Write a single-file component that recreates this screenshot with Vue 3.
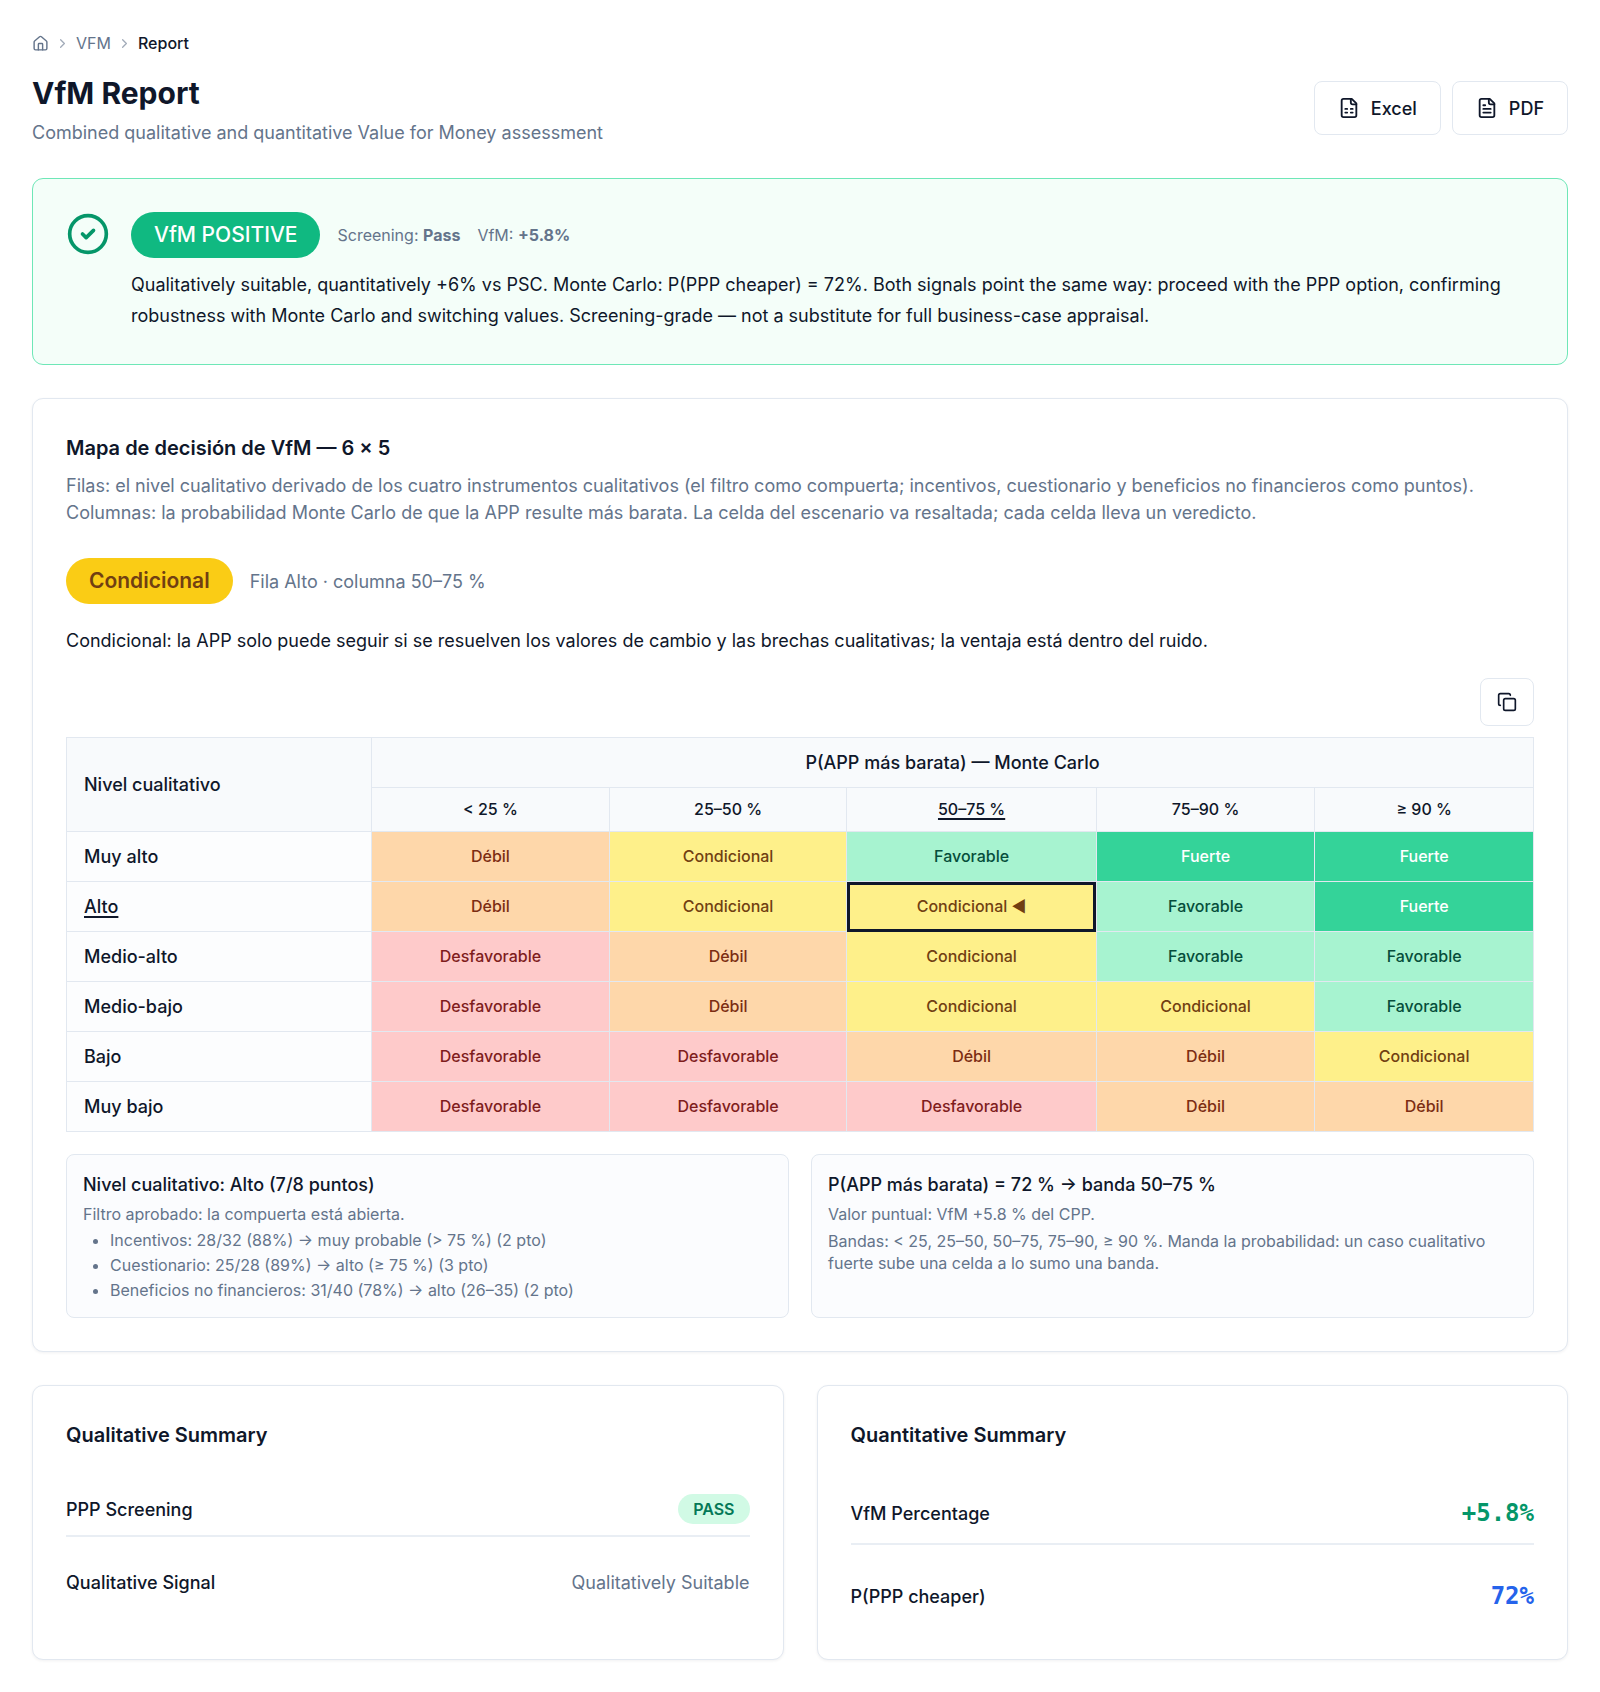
<script setup>
const bands = ['< 25 %', '25–50 %', '50–75 %', '75–90 %', '≥ 90 %']
const activeBand = 2
const activeLevel = 1

const D = 'Débil'
const C = 'Condicional'
const F = 'Favorable'
const S = 'Fuerte'
const X = 'Desfavorable'

const levels = [
  { name: 'Muy alto', cells: [D, C, F, S, S] },
  { name: 'Alto', cells: [D, C, C, F, S] },
  { name: 'Medio-alto', cells: [X, D, C, F, F] },
  { name: 'Medio-bajo', cells: [X, D, C, C, F] },
  { name: 'Bajo', cells: [X, X, D, D, C] },
  { name: 'Muy bajo', cells: [X, X, X, D, D] },
]

const tone = { [D]: 'weak', [C]: 'conditional', [F]: 'favorable', [S]: 'strong', [X]: 'unfavorable' }

const isScenario = (l, b) => l === activeLevel && b === activeBand

const points = [
  'Incentivos: 28/32 (88%) → muy probable (> 75 %) (2 pto)',
  'Cuestionario: 25/28 (89%) → alto (≥ 75 %) (3 pto)',
  'Beneficios no financieros: 31/40 (78%) → alto (26–35) (2 pto)',
]
</script>

<template>
  <main class="page">
    <nav class="crumbs" aria-label="Breadcrumb">
      <a href="#" aria-label="Home">
        <svg class="icon home" viewBox="0 0 24 24">
          <path d="M15 21v-8a1 1 0 0 0-1-1h-4a1 1 0 0 0-1 1v8" />
          <path d="M3 10a2 2 0 0 1 .709-1.528l7-5.999a2 2 0 0 1 2.582 0l7 5.999A2 2 0 0 1 21 10v9a2 2 0 0 1-2 2H5a2 2 0 0 1-2-2z" />
        </svg>
      </a>
      <svg class="icon chevron" viewBox="0 0 24 24"><path d="m9 18 6-6-6-6" /></svg>
      <a href="#">VFM</a>
      <svg class="icon chevron" viewBox="0 0 24 24"><path d="m9 18 6-6-6-6" /></svg>
      <span class="current">Report</span>
    </nav>

    <header class="head">
      <div>
        <h1>VfM Report</h1>
        <p class="subtitle">Combined qualitative and quantitative Value for Money assessment</p>
      </div>
      <div class="actions">
        <button type="button" class="btn">
          <svg class="icon file" viewBox="0 0 24 24">
            <path d="M15 2H6a2 2 0 0 0-2 2v16a2 2 0 0 0 2 2h12a2 2 0 0 0 2-2V7Z" />
            <path d="M14 2v4a2 2 0 0 0 2 2h4M8 13h2M14 13h2M8 17h2M14 17h2" />
          </svg>
          Excel
        </button>
        <button type="button" class="btn">
          <svg class="icon file" viewBox="0 0 24 24">
            <path d="M15 2H6a2 2 0 0 0-2 2v16a2 2 0 0 0 2 2h12a2 2 0 0 0 2-2V7Z" />
            <path d="M14 2v4a2 2 0 0 0 2 2h4M10 9H8M16 13H8M16 17H8" />
          </svg>
          PDF
        </button>
      </div>
    </header>

    <section class="verdict">
      <svg class="icon check" viewBox="0 0 24 24">
        <circle cx="12" cy="12" r="10" />
        <path d="m9 12 2 2 4-4" />
      </svg>
      <div class="verdict-body">
        <div class="line">
          <span class="pill positive">VfM POSITIVE</span>
          <span class="meta">Screening: <strong>Pass</strong></span>
          <span class="meta">VfM: <strong>+5.8%</strong></span>
        </div>
        <p class="explain">
          Qualitatively suitable, quantitatively +6% vs PSC. Monte Carlo: P(PPP cheaper) = 72%. Both signals point the
          same way: proceed with the PPP option, confirming robustness with Monte Carlo and switching values.
          Screening-grade — not a substitute for full business-case appraisal.
        </p>
      </div>
    </section>

    <section class="card">
      <h2>Mapa de decisión de VfM — 6 × 5</h2>
      <p class="description">
        Filas: el nivel cualitativo derivado de los cuatro instrumentos cualitativos (el filtro como compuerta;
        incentivos, cuestionario y beneficios no financieros como puntos). Columnas: la probabilidad Monte Carlo de que
        la APP resulte más barata. La celda del escenario va resaltada; cada celda lleva un veredicto.
      </p>

      <div class="line outcome">
        <span class="pill amber">Condicional</span>
        <span class="where">Fila Alto · columna 50–75 %</span>
      </div>
      <p class="advice">
        Condicional: la APP solo puede seguir si se resuelven los valores de cambio y las brechas cualitativas; la
        ventaja está dentro del ruido.
      </p>

      <div class="tools">
        <button type="button" class="btn copy" aria-label="Copiar tabla">
          <svg class="icon file" viewBox="0 0 24 24">
            <rect x="8" y="8" width="14" height="14" rx="2" />
            <path d="M4 16c-1.1 0-2-.9-2-2V4c0-1.1.9-2 2-2h10c1.1 0 2 .9 2 2" />
          </svg>
        </button>
      </div>

      <table>
        <colgroup>
          <col class="c-level" />
          <col class="c-low" />
          <col class="c-low" />
          <col class="c-mid" />
          <col class="c-high" />
          <col class="c-high" />
        </colgroup>
        <thead>
          <tr class="group">
            <th rowspan="2" scope="col" class="level">Nivel cualitativo</th>
            <th colspan="5" scope="colgroup">P(APP más barata) — Monte Carlo</th>
          </tr>
          <tr class="bands">
            <th v-for="(band, b) in bands" :key="band" scope="col">
              <span :class="{ marked: b === activeBand }">{{ band }}</span>
            </th>
          </tr>
        </thead>
        <tbody>
          <tr v-for="(level, l) in levels" :key="level.name">
            <th scope="row" class="level">
              <span :class="{ marked: l === activeLevel }">{{ level.name }}</span>
            </th>
            <td
              v-for="(cell, b) in level.cells"
              :key="b"
              :class="[tone[cell], { selected: isScenario(l, b) }]"
            >
              {{ isScenario(l, b) ? `${cell} ◀` : cell }}
            </td>
          </tr>
        </tbody>
      </table>

      <div class="notes">
        <div class="note">
          <h3>Nivel cualitativo: Alto (7/8 puntos)</h3>
          <p>Filtro aprobado: la compuerta está abierta.</p>
          <ul>
            <li v-for="point in points" :key="point">{{ point }}</li>
          </ul>
        </div>
        <div class="note">
          <h3>P(APP más barata) = 72 % → banda 50–75 %</h3>
          <p>Valor puntual: VfM +5.8 % del CPP.</p>
          <p>
            Bandas: &lt; 25, 25–50, 50–75, 75–90, ≥ 90 %. Manda la probabilidad: un caso cualitativo fuerte sube una
            celda a lo sumo una banda.
          </p>
        </div>
      </div>
    </section>

    <div class="summaries">
      <section class="card">
        <h2>Qualitative Summary</h2>
        <dl>
          <div class="row">
            <dt>PPP Screening</dt>
            <dd><span class="pass">PASS</span></dd>
          </div>
          <div class="row">
            <dt>Qualitative Signal</dt>
            <dd class="muted">Qualitatively Suitable</dd>
          </div>
        </dl>
      </section>
      <section class="card">
        <h2>Quantitative Summary</h2>
        <dl>
          <div class="row">
            <dt>VfM Percentage</dt>
            <dd class="figure green">+5.8%</dd>
          </div>
          <div class="row">
            <dt>P(PPP cheaper)</dt>
            <dd class="figure blue">72%</dd>
          </div>
        </dl>
      </section>
    </div>
  </main>
</template>

<style>
body {
  margin: 0;
  background: #fff;
}
</style>

<style scoped>
.page {
  box-sizing: border-box;
  padding: 32px;
  font-family: Inter, "Liberation Sans", sans-serif;
  font-size: 18px;
  line-height: 27px;
  color: #0f172a;
}
.page * {
  box-sizing: border-box;
}
h1,
h2,
h3,
p,
ul,
dl,
dd {
  margin: 0;
  padding: 0;
}
.icon {
  flex: none;
  display: block;
  fill: none;
  stroke: currentColor;
  stroke-width: 2;
  stroke-linecap: round;
  stroke-linejoin: round;
}

.crumbs {
  display: flex;
  align-items: center;
  gap: 6px;
  font-size: 16px;
  line-height: 22px;
  color: #64748b;
}
.crumbs a {
  color: inherit;
  text-decoration: none;
}
.home {
  width: 17px;
  height: 17px;
}
.chevron {
  width: 15px;
  height: 15px;
  opacity: 0.6;
}
.current {
  font-weight: 500;
  color: #0f172a;
}

.head {
  display: flex;
  align-items: center;
  justify-content: space-between;
  margin: 16px 0 32px;
}
h1 {
  font-size: 30px;
  line-height: 46px;
  font-weight: 700;
}
.subtitle {
  margin-top: 3px;
  color: #64748b;
}
.actions {
  display: flex;
  gap: 11px;
}
.btn {
  display: flex;
  align-items: center;
  justify-content: center;
  gap: 11px;
  height: 54px;
  padding: 0 23px;
  border: 1px solid #e2e8f0;
  border-radius: 8px;
  background: #fff;
  font: inherit;
  font-weight: 500;
  color: inherit;
}
.file {
  width: 22px;
  height: 22px;
}

.verdict {
  display: flex;
  align-items: flex-start;
  gap: 21px;
  padding: 33px;
  border: 1px solid #6ee7b7;
  border-radius: 11px;
  background: #f4fef9;
}
.check {
  width: 44px;
  height: 44px;
  color: #059669;
}
.line {
  display: flex;
  align-items: center;
  gap: 17px;
}
.pill {
  padding: 0 23px;
  border-radius: 23px;
  font-size: 21px;
  line-height: 46px;
}
.positive {
  background: #10b981;
  color: #fff;
  font-weight: 500;
}
.amber {
  background: #facc15;
  color: #713f12;
  font-weight: 600;
}
.meta {
  font-size: 16px;
  color: #64748b;
}
.explain {
  margin-top: 11px;
  line-height: 31px;
}

.card {
  margin-top: 33px;
  padding: 33px;
  border: 1px solid #e2e8f0;
  border-radius: 11px;
  background: #fff;
  box-shadow: 0 1px 3px rgba(15, 23, 42, 0.06);
}
h2 {
  font-size: 20px;
  line-height: 33px;
  font-weight: 600;
}
.description {
  margin-top: 7px;
  color: #64748b;
}
.outcome {
  margin-top: 32px;
}
.where {
  color: #64748b;
}
.advice {
  margin-top: 23px;
}
.tools {
  display: flex;
  justify-content: flex-end;
  margin: 24px 0 11px;
}
.copy {
  width: 54px;
  height: 48px;
  padding: 0;
}
.copy .file {
  width: 20px;
  height: 20px;
}

table {
  width: 100%;
  table-layout: fixed;
  border-collapse: collapse;
}
.c-level {
  width: 20.8%;
}
.c-low {
  width: 16.2%;
}
.c-mid {
  width: 17%;
}
.c-high {
  width: 14.9%;
}
th,
td {
  height: 50px;
  padding: 0 17px;
  border: 1px solid #e2e8f0;
  text-align: center;
  font-weight: 500;
}
thead th {
  background: #f8fafc;
}
.bands th {
  height: 44px;
  font-size: 16px;
}
tbody .level {
  background: #fcfdfe;
}
.level {
  text-align: left;
}
.marked {
  text-decoration: underline;
  text-decoration-thickness: 2px;
  text-underline-offset: 3px;
}
td {
  font-size: 16px;
}
.weak {
  background: #fed7aa;
  color: #7c2d12;
}
.conditional {
  background: #fef08a;
  color: #713f12;
}
.favorable {
  background: #a7f3d0;
  color: #064e3b;
}
.strong {
  background: #34d399;
  color: #fff;
}
.unfavorable {
  background: #fecaca;
  color: #7f1d1d;
}
.selected {
  outline: 3px solid #0f172a;
  outline-offset: -3px;
}

.notes {
  display: grid;
  grid-template-columns: 1fr 1fr;
  gap: 22px;
  margin-top: 22px;
}
.note {
  padding: 16px;
  border: 1px solid #e2e8f0;
  border-radius: 8px;
  background: #fbfcfe;
  font-size: 16px;
  line-height: 22px;
  color: #64748b;
}
.note h3 {
  font-size: 18px;
  line-height: 27px;
  font-weight: 500;
  color: #0f172a;
}
.note p {
  margin-top: 5px;
}
.note ul {
  display: flex;
  flex-direction: column;
  gap: 3px;
  margin-top: 4px;
  padding-left: 27px;
}

.summaries {
  display: grid;
  grid-template-columns: 1fr 1fr;
  gap: 33px;
}
dl {
  display: flex;
  flex-direction: column;
  gap: 32px;
  margin-top: 42px;
}
.row {
  display: flex;
  align-items: center;
  justify-content: space-between;
  padding-bottom: 11px;
}
.row:not(:last-child) {
  border-bottom: 2px solid #e9eef4;
}
dt {
  font-weight: 500;
}
.muted {
  color: #64748b;
}
.pass {
  display: block;
  padding: 0 15px;
  border-radius: 15px;
  background: #d1fae5;
  color: #047857;
  font-size: 16px;
  line-height: 30px;
  font-weight: 600;
}
.figure {
  font-family: "DejaVu Sans Mono", monospace;
  font-size: 24px;
  line-height: 38px;
  font-weight: 700;
}
.green {
  color: #059669;
}
.blue {
  color: #2563eb;
}
</style>
